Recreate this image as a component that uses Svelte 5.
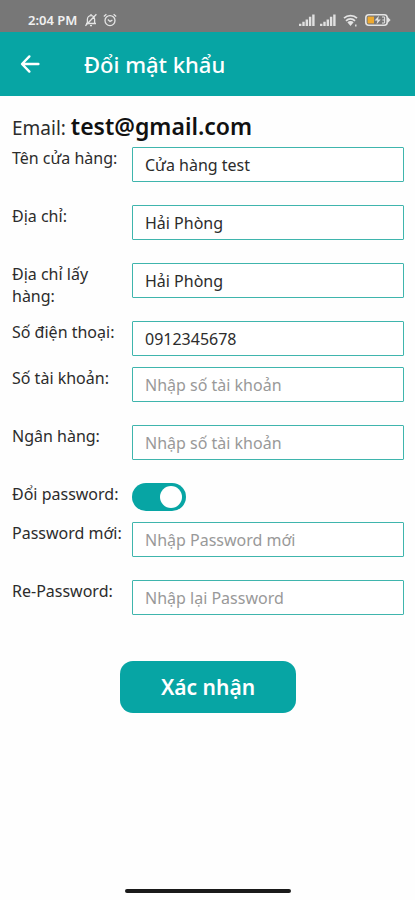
<script lang="ts">
  let changePassword = $state(true);

  const info = $state([
    { id: 'shop', label: 'Tên cửa hàng:', value: 'Cửa hàng test', placeholder: '', tight: false },
    { id: 'address', label: 'Địa chỉ:', value: 'Hải Phòng', placeholder: '', tight: false },
    { id: 'pickup', label: 'Địa chỉ lấy hàng:', value: 'Hải Phòng', placeholder: '', tight: false },
    { id: 'phone', label: 'Số điện thoại:', value: '0912345678', placeholder: '', tight: true },
    { id: 'account', label: 'Số tài khoản:', value: '', placeholder: 'Nhập số tài khoản', tight: false },
    { id: 'bank', label: 'Ngân hàng:', value: '', placeholder: 'Nhập số tài khoản', tight: false },
  ]);

  const passwords = $state([
    { id: 'password', label: 'Password mới:', value: '', placeholder: 'Nhập Password mới' },
    { id: 'repassword', label: 'Re-Password:', value: '', placeholder: 'Nhập lại Password' },
  ]);
</script>

<div class="screen">
  <div class="status">
    <span class="time">2:04 PM</span>
    <svg width="14" height="14" viewBox="0 0 14 14" fill="none" stroke="#e4e4e4" stroke-width="1.3">
      <path d="M2 10.5h10M3.4 10.5V6.2a3.6 3.6 0 0 1 7.2 0v4.3M6 12.6h2M7 2.6V1M12.4 1.2 1.4 12.8" />
    </svg>
    <svg width="14" height="14" viewBox="0 0 14 14" fill="none" stroke="#e4e4e4" stroke-width="1.3">
      <circle cx="7" cy="7.6" r="5" />
      <path d="M4.8 6.6 7 8.4l2.4-1.2M.8 3.4 3.4 1.2M13.2 3.4l-2.6-2.2" />
    </svg>
    <span class="spacer"></span>
    {#each [0, 1] as n (n)}
      <svg width="16" height="12" viewBox="0 0 16 12" fill="#e0e0e0">
        <path d="M0 9.8h2.4V12H0zM3.3 7.8h2.4V12H3.3zM6.6 5.4H9V12H6.6zM9.9 2.8h2.4V12H9.9zM13.2.4h2.4V12h-2.4z" />
      </svg>
    {/each}
    <svg class="wifi" width="15" height="13" viewBox="0 0 15 13" fill="none" stroke="#e4e4e4" stroke-width="1.7">
      <path d="M1 4.2a9.4 9.4 0 0 1 13 0M3 6.8a6.4 6.4 0 0 1 9 0" />
      <path d="M4.4 8.2a4.4 4.4 0 0 1 6.2 0L7.5 12z" fill="#e4e4e4" stroke="none" />
      <path d="M12.8 10.4v2.2" stroke-width="1.4" />
    </svg>
    <svg width="26" height="12" viewBox="0 0 26 12">
      <rect x=".8" y=".8" width="21.4" height="10.4" rx="3" fill="#777" stroke="#e4e4e4" stroke-width="1.6" />
      <path d="M23 3.2 25.6 6 23 8.8z" fill="#e4e4e4" />
      <rect x="2.6" y="2.6" width="6.4" height="6.8" fill="#eda92f" />
      <path d="m14 1.8-4.4 4.8h2.8l-.8 3.6 4.2-4.8H13z" fill="#e4e4e4" />
      <path d="M17 3h2.6v6H17M17.4 6h2" fill="none" stroke="#e4e4e4" />
    </svg>
  </div>

  <header>
    <button class="back" aria-label="Quay lại">
      <svg width="20" height="20" viewBox="0 0 20 20" fill="none" stroke="#fff" stroke-width="2.4" stroke-linecap="round" stroke-linejoin="round">
        <path d="M18.4 10H2.4M9.4 2.4 2 10l7.4 7.6" />
      </svg>
    </button>
    <h1>Đổi mật khẩu</h1>
  </header>

  <main>
    <p class="email">Email: <strong>test@gmail.com</strong></p>

    {#each info as field (field.id)}
      <div class="row" class:tight={field.tight}>
        <label for={field.id}>{field.label}</label>
        <input id={field.id} type="text" bind:value={field.value} placeholder={field.placeholder} />
      </div>
    {/each}

    <div class="row toggle">
      <label for="toggle">Đổi password:</label>
      <input id="toggle" class="switch" type="checkbox" role="switch" bind:checked={changePassword} />
    </div>

    {#if changePassword}
      {#each passwords as field (field.id)}
        <div class="row">
          <label for={field.id}>{field.label}</label>
          <input id={field.id} type="password" bind:value={field.value} placeholder={field.placeholder} />
        </div>
      {/each}
    {/if}

    <button class="confirm">Xác nhận</button>
  </main>

  <div class="home"></div>
</div>

<style>
  :global(body) {
    margin: 0;
    background: #fefefe;
  }

  .screen {
    display: flex;
    flex-direction: column;
    min-height: 100vh;
    font-family: 'Noto Sans', sans-serif;
    color: #2c2c2c;
  }

  .status {
    display: flex;
    align-items: center;
    gap: 5px;
    height: 32px;
    padding: 8px 24px 0 28px;
    box-sizing: border-box;
    background: #777;
    color: #f0f0f0;
  }

  .time {
    margin-right: 2px;
    font-size: 13px;
    font-weight: 600;
    line-height: 16px;
  }

  .spacer {
    flex: 1;
  }

  .wifi {
    margin: 0 2px;
  }

  header {
    display: flex;
    align-items: center;
    gap: 44px;
    height: 64px;
    padding: 0 20px;
    background: #07a5a4;
    color: #fff;
  }

  .back {
    display: flex;
    padding: 0;
    border: none;
    background: none;
    cursor: pointer;
  }

  h1 {
    margin: 0;
    font-size: 22px;
    font-weight: 500;
    line-height: 32px;
  }

  main {
    display: flex;
    flex-direction: column;
    padding: 14px 11px 24px 12px;
  }

  .email {
    margin: 0 0 3px;
    font-size: 19px;
    line-height: 32px;
  }

  .email strong {
    font-size: 23px;
    font-weight: 600;
    color: #111;
  }

  .row {
    display: flex;
    align-items: flex-start;
    min-height: 58px;
  }

  .row.tight {
    min-height: 46px;
  }

  .row.toggle {
    min-height: 39px;
  }

  label {
    width: 120px;
    flex-shrink: 0;
    font-size: 16px;
    line-height: 22px;
  }

  input {
    flex: 1;
    min-width: 0;
    height: 35px;
    box-sizing: border-box;
    margin: 0;
    padding: 0 12px;
    border: 1px solid #3fb5ad;
    border-radius: 1px;
    background: #fff;
    color: #2c2c2c;
    font-family: inherit;
    font-size: 16px;
  }

  input::placeholder {
    color: #999;
    opacity: 1;
  }

  .switch {
    appearance: none;
    display: flex;
    align-items: center;
    flex: none;
    width: 54px;
    height: 28px;
    padding: 0 4px;
    border: none;
    border-radius: 14px;
    background: #bbb;
    cursor: pointer;
  }

  .switch::before {
    content: '';
    width: 22px;
    height: 22px;
    border-radius: 50%;
    background: #fff;
  }

  .switch:checked {
    justify-content: flex-end;
    background: #07a5a4;
  }

  .confirm {
    align-self: center;
    width: 176px;
    height: 52px;
    margin-top: 23px;
    border: none;
    border-radius: 13px;
    background: #07a5a4;
    color: #fff;
    font-family: inherit;
    font-size: 21px;
    font-weight: 600;
    cursor: pointer;
  }

  .home {
    width: 40%;
    height: 4px;
    margin: auto auto 7px;
    border-radius: 2px;
    background: #1a1a1a;
  }
</style>
